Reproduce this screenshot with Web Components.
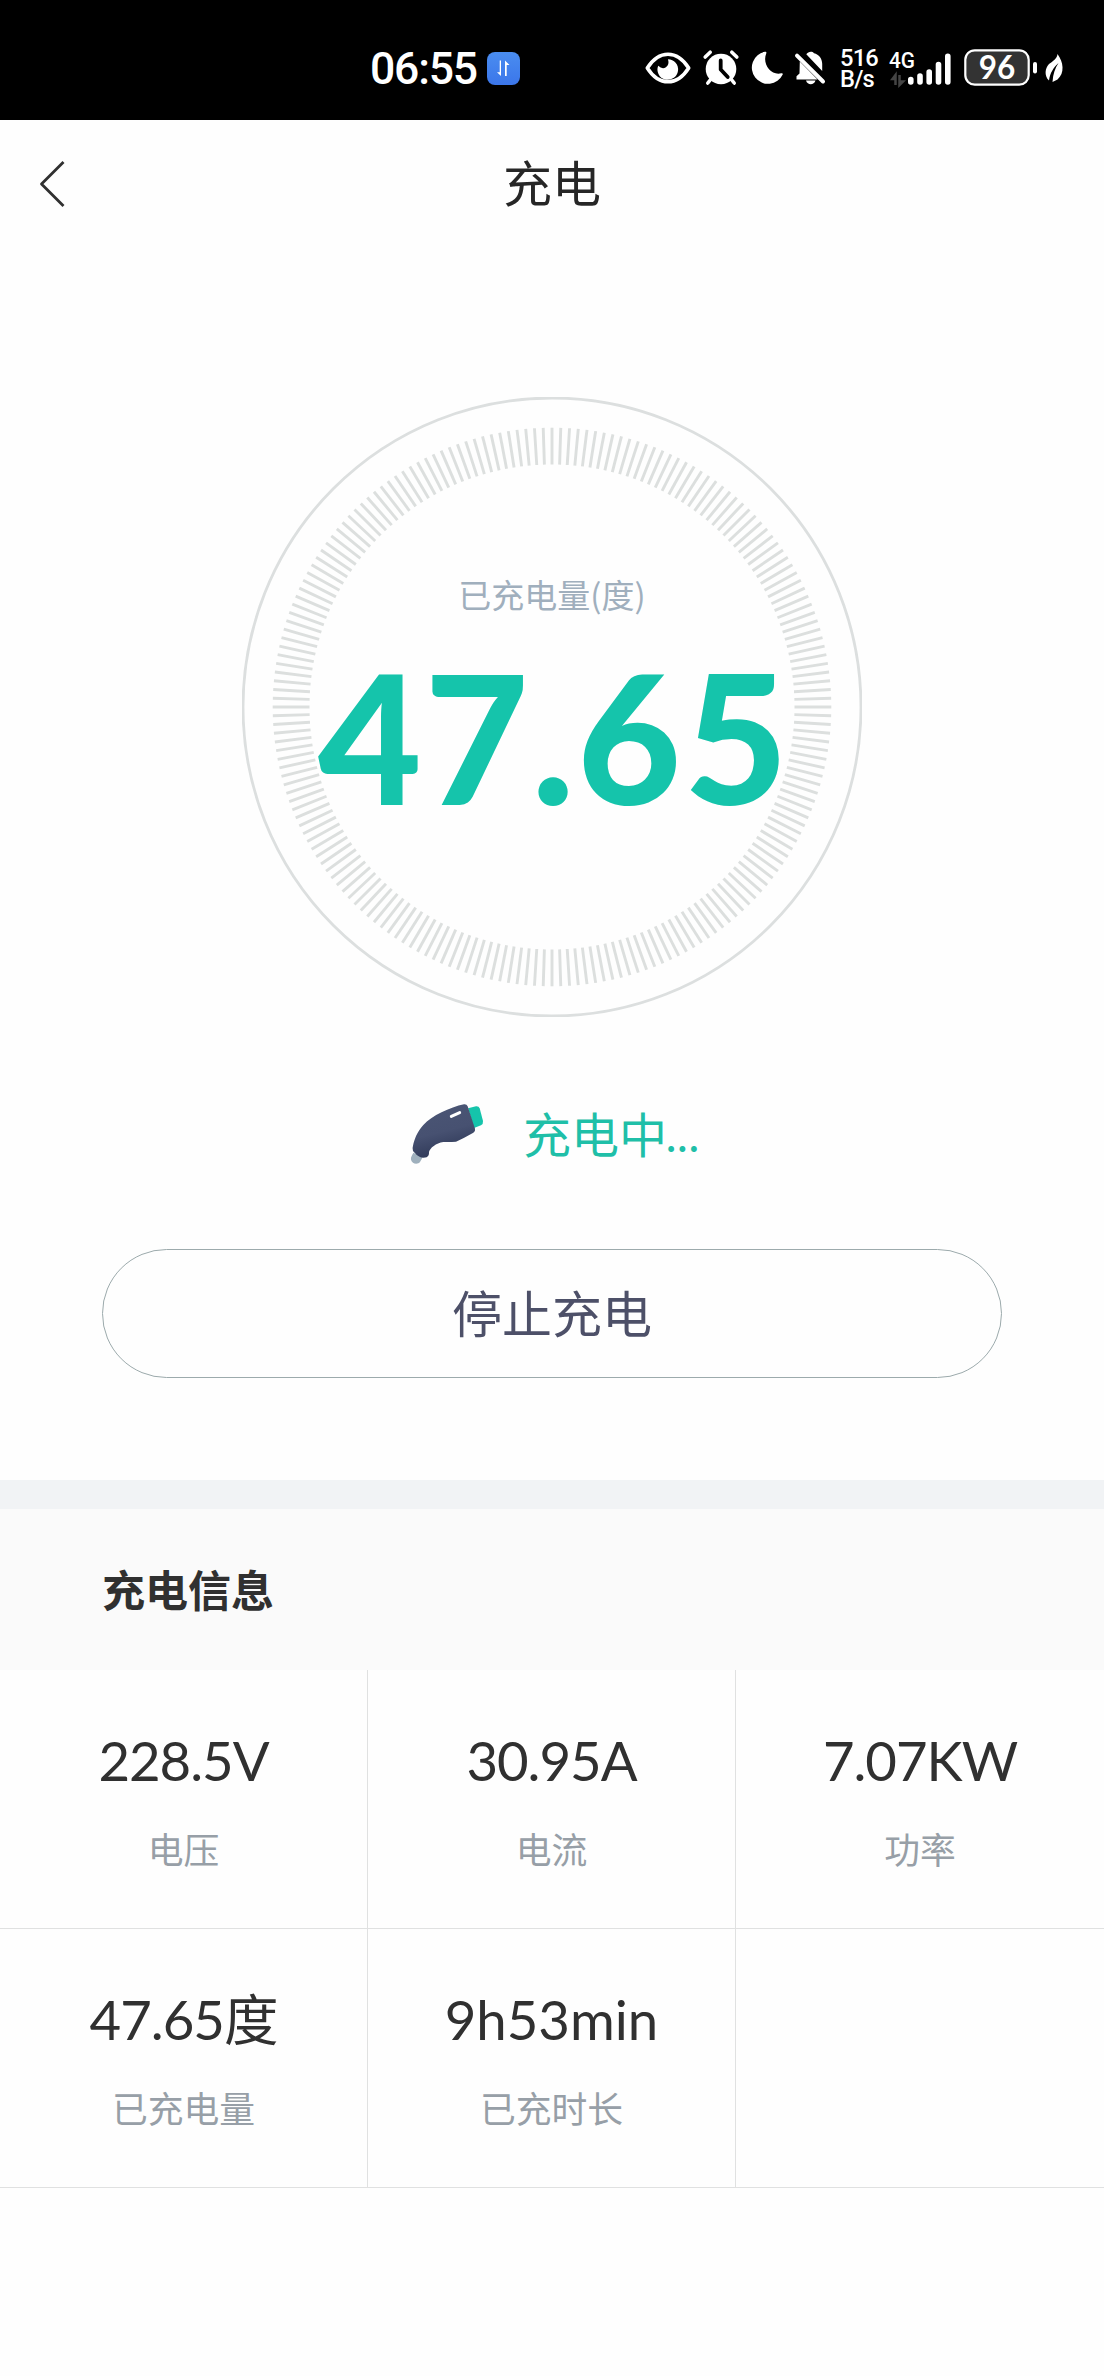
<!DOCTYPE html>
<html lang="zh-CN">
<head>
<meta charset="utf-8">
<title>充电</title>
<style>
  body { margin: 0; background: #fefefe; font-family: "Noto Sans CJK SC", sans-serif; color: #303030; }
</style>
</head>
<body>
<charging-page></charging-page>

<script>
function define(name, html, setup) {
  const tpl = document.createElement('template');
  tpl.innerHTML = html;
  customElements.define(name, class extends HTMLElement {
    connectedCallback() {
      if (this.shadowRoot) return;
      this.attachShadow({ mode: 'open' }).append(tpl.content.cloneNode(true));
      if (setup) setup(this, this.shadowRoot);
    }
  });
}

define('status-bar', `
<style>
  :host { display: flex; height: 120px; background: #000; color: #fff; box-sizing: border-box; padding: 0 41px 0 370px; align-items: center; }
  svg { display: block; flex: none; overflow: visible; }
  .time { font: 500 44.5px/54px Roboto, sans-serif; letter-spacing: -1.2px; width: 118px; padding-top: 17px; white-space: nowrap; }
  .icons { display: flex; align-items: center; margin-left: 125px; height: 120px; padding-top: 15px; box-sizing: border-box; }
  .rate { width: 49px; margin-left: 14px; font: 500 23.7px/21px Roboto, sans-serif; letter-spacing: -0.8px; padding-top: 2px; }
  .rate span { display: block; }
  .badge { margin-top: 17px; }
</style>
<span class="time">06:55</span>
<svg class="badge" width="33" height="33" viewBox="0 0 33 33">
  <defs><linearGradient id="b" x2="0" y2="1"><stop stop-color="#4a8df0"/><stop offset="1" stop-color="#3b76ea"/></linearGradient></defs>
  <rect width="33" height="33" rx="8" fill="url(#b)"/>
  <path d="M14 8.500V24L10 20.300h2.700V8.500zM18 24V8.500l4.500 4.500h-2.800V24z" fill="#fff"/>
</svg>
<div class="icons">
  <svg width="46" height="34" viewBox="0 0 46 34">
    <path d="M2.300 17Q11 3.200 23 3.200T43.700 17Q35 30.800 23 30.800T2.300 17Z" fill="none" stroke="#fff" stroke-width="3.600" stroke-linejoin="round"/>
    <path d="M23 8.200a10.300 10.300 0 1 1-9.800 6.500q4 4 7.700 1.500t2.100-8z" fill="#fff"/>
  </svg>
  <svg style="margin-left:12px" width="36" height="36" viewBox="0 0 36 36">
    <circle cx="18" cy="19" r="15.300" fill="#fff"/>
    <path d="M2.200 7l5-4.800M33.800 7l-5-4.800M8 29l-3.200 4M28 29l3.200 4" stroke="#fff" stroke-width="3.600" stroke-linecap="round"/>
    <path d="M17.700 10.500v9l7 7.500" fill="none" stroke="#000" stroke-width="3.800" stroke-linecap="round" stroke-linejoin="round"/>
  </svg>
  <svg style="margin-left:12px" width="32" height="36" viewBox="0 0 32 36">
    <path d="M14 1.700A16.200 16.200 0 1 0 31.700 24.500c.3-1-.6-1.500-1.400-1.200C20 26 10.800 14 15.300 3.200c.4-1-.3-1.700-1.300-1.500z" fill="#fff"/>
  </svg>
  <svg style="margin-left:12px" width="31" height="36" viewBox="0 0 31 36">
    <path d="M2 5.700L28 31.500" stroke="#fff" stroke-width="4" stroke-linecap="round"/>
    <path d="M4.800 11.500L22.500 29.500H1.500v-3.200l3-2.800zM11.300 4.300C13 1.600 17 .8 19 3.200c5 1.200 8.200 5.500 8.200 10.500v7.300zM11 30.500h9.500c-1.500 5-8 5-9.500 0z" fill="#fff"/>
  </svg>
  <div class="rate"><span>516</span><span>B/s</span></div>
  <svg width="64" height="40" viewBox="0 0 64 40">
    <text x="0" y="19.500" font-family="Roboto" font-weight="500" font-size="22.500" textLength="26" lengthAdjust="spacingAndGlyphs" fill="#fff">4G</text>
    <path d="M6.500 27v10M3.500 31l3-4v4zM10.500 27v10l3.500-3.500h-3.500z" stroke="#444" stroke-width="2.500" fill="#444"/>
    <g stroke="#fff" stroke-width="5.600" stroke-linecap="round"><path d="M21.800 31.500v2.500M31 28v6M40.200 24v10M49.500 16.500V34M58.800 8.200V34"/></g>
  </svg>
  <svg style="margin-left:11px" width="74" height="38" viewBox="0 0 74 38">
    <rect x="1.300" y="1.300" width="63.400" height="34.400" rx="9.500" fill="#333" stroke="#fff" stroke-width="2.200"/>
    <rect x="69" y="13" width="4" height="11.500" rx="2" fill="#fff"/>
    <text x="33" y="30" text-anchor="middle" font-family="Lato" font-weight="700" font-size="31.500" textLength="36.500" fill="#fff">96</text>
  </svg>
  <svg style="margin-left:7px" width="18" height="30" viewBox="0 0 18 30">
    <path d="M12.500 1C18.500 9 20 20 12.500 26.500L7.500 29C8 21 10 15 13.500 10C8.500 14.500 5 20 4 27.500C-1 23 0 15 4 11C8 8 12 6 12.500 1z" fill="#fff"/>
  </svg>
</div>`);

define('nav-bar', `
<style>
  :host { display: grid; grid-template-columns: 104px 1fr 104px; align-items: center; height: 122px; color: #262626; }
  svg { display: block; margin: 5px 0 0 38px; }
  h1 { margin: 0; font-weight: 400; font-size: 49px; line-height: 60px; text-align: center; }
</style>
<svg width="28" height="48" viewBox="0 0 28 48"><path d="M25.500 2L3.500 24l22 22" fill="none" stroke="#303030" stroke-width="2.800" stroke-linejoin="round"/></svg>
<h1><slot></slot></h1>`);

define('charge-gauge', `
<style>
  :host { display: grid; justify-content: center; margin-top: 155px; height: 620px; }
  svg, .text { grid-area: 1 / 1; }
  .text { display: flex; flex-direction: column; align-items: center; padding-top: 173px; }
  .label { font-size: 33px; line-height: 48px; color: #a0afbd; }
  .num { font: 900 179px/200px Lato, sans-serif; color: #15c4ab; letter-spacing: 3px; margin-top: 18px; padding-left: 5px; white-space: nowrap; }
</style>
<svg width="620" height="620" viewBox="-310 -310 620 620">
  <circle r="309" fill="none" stroke="#dcdfdf" stroke-width="2.800"/>
  <g stroke="#dcdfde" stroke-width="2.900"></g>
</svg>
<div class="text"><span class="label"><slot></slot></span><span class="num"></span></div>`,
(host, root) => {
  root.querySelector('.num').textContent = host.getAttribute('value');
  const g = root.querySelector('g');
  for (let i = 0; i < 200; i++) {
    const l = document.createElementNS('http://www.w3.org/2000/svg', 'line');
    l.setAttribute('y1', -279.3);
    l.setAttribute('y2', -242.5);
    l.setAttribute('transform', `rotate(${i * 1.8})`);
    g.append(l);
  }
});

define('charge-state', `
<style>
  :host { display: flex; align-items: center; margin-top: 80px; height: 70px; padding-left: 410px; color: #1fbfa8; font-size: 48px; line-height: 70px; }
  svg { display: block; margin: 4px 39px 0 0; }
  .dots { font-size: 44px; letter-spacing: -0.9px; margin-left: -2px; }
</style>
<svg width="74" height="62" viewBox="60 70 222 186">
  <defs><linearGradient id="g" x1="0" y1="0" x2=".3" y2="1"><stop stop-color="#4b5675"/><stop offset=".6" stop-color="#475171"/><stop offset="1" stop-color="#303a59"/></linearGradient></defs>
  <path d="M70 219L98 233L90 247C86 253 75 254 69 249C62 245 61 235 65 229z" fill="#9fb0bd"/>
  <path d="M234 86L258 80Q266 79 269 86L279 124Q280 133 273 137L252 145z" fill="#15c4ab"/>
  <path d="M222 74Q230 73 233 80L255 147Q257 155 250 159Q224 174 198 186Q180 188 160 187C138 190 120 205 117 217Q118 228 110 233Q98 236 90 232Q78 226 69 214Q66 206 69 198C73 180 80 158 100 136C125 108 180 83 222 74z" fill="url(#g)"/>
  <path d="M184 110L209 99" stroke="#fff" stroke-width="9" stroke-linecap="round"/>
</svg>
<span><slot></slot></span><span class="dots">...</span>`);

define('pill-button', `
<style>
  :host { display: block; margin: 82px 102px 0; }
  button { display: block; width: 100%; height: 129px; padding: 0 0 5px; border: 1px solid #9caaac; border-radius: 65px; background: #fefefe; font: 400 50px/70px "Noto Sans CJK SC", sans-serif; color: #4d5068; }
</style>
<button><slot></slot></button>`);

define('info-section', `
<style>
  :host { display: block; margin-top: 102px; border-top: 29px solid #f1f3f5; }
  h2 { margin: 0; height: 161px; box-sizing: border-box; padding: 0 0 3px 102px; display: flex; align-items: center; background: #fafafa; font-size: 43px; font-weight: 700; color: #303030; }
  .grid { display: grid; grid-template-columns: 368px 368px 368px; grid-auto-rows: 259px; }
</style>
<h2></h2>
<div class="grid"><slot></slot></div>`,
(host, root) => { root.querySelector('h2').textContent = host.getAttribute('heading'); });

define('info-cell', `
<style>
  :host { display: flex; flex-direction: column; align-items: center; box-sizing: border-box; border-right: 1px solid #e0e1e1; border-bottom: 1px solid #e0e1e1; padding-top: 55px; }
  :host([last]) { border-right: 0; }
  .v { font: 400 54.500px/70px Lato, "Noto Sans CJK SC", sans-serif; color: #303030; letter-spacing: -1px; white-space: nowrap; font-kerning: none; }
  :host([wide]) .v { letter-spacing: 0; }
  .l { font-size: 35.800px; line-height: 50px; margin-top: 28px; color: #979fa7; }
</style>
<span class="v"></span><span class="l"><slot></slot></span>`,
(host, root) => { root.querySelector('.v').textContent = host.getAttribute('value') || ''; });

define('charging-page', `
<style>:host { display: block; width: 1104px; height: 2376px; overflow: hidden; }</style>
<status-bar></status-bar>
<nav-bar>充电</nav-bar>
<charge-gauge value="47.65">已充电量(度)</charge-gauge>
<charge-state>充电中</charge-state>
<pill-button>停止充电</pill-button>
<info-section heading="充电信息">
  <info-cell value="228.5V">电压</info-cell>
  <info-cell value="30.95A">电流</info-cell>
  <info-cell value="7.07KW" last>功率</info-cell>
  <info-cell value="47.65度">已充电量</info-cell>
  <info-cell value="9h53min" wide>已充时长</info-cell>
  <info-cell last></info-cell>
</info-section>`);
</script>
</body>
</html>
